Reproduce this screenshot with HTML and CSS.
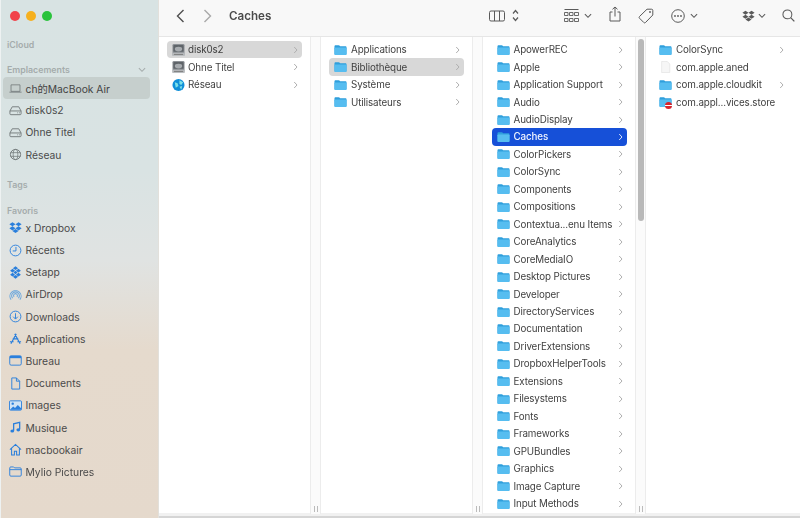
FILE: index.html
```html
<!DOCTYPE html>
<html lang="fr">
<head>
<meta charset="utf-8">
<title>Caches</title>
<link rel="stylesheet" href="styles.css">
</head>
<body>
<svg class="defs" aria-hidden="true">
  <symbol id="folder" viewBox="0 0 14 12">
    <path d="M0.5 2.2C0.5 1.3 1 .8 1.9 .8H5c.6 0 .9.2 1.2.6l.5.6h5.4c1 0 1.4.5 1.4 1.4V10c0 1-.5 1.5-1.4 1.5H1.9C1 11.500 .5 11 .5 10z" fill="#2f9fdc"/>
    <path d="M.5 4.200C.5 3.600.9 3.300 1.500 3.300H12.500C13.100 3.300 13.500 3.600 13.500 4.200V10C13.500 11 13 11.500 12.100 11.500H1.900C1 11.500 .5 11 .5 10z" fill="#56bdf0"/>
  </symbol>
  <symbol id="disk" viewBox="0 0 14 14">
    <rect x=".5" y=".5" width="13" height="13" rx="1.500" fill="#8d9196"/>
    <rect x="1.500" y="1.500" width="11" height="7.500" rx="1" fill="#5f6469"/>
    <ellipse cx="7" cy="6" rx="4" ry="2.500" fill="#a7abaf"/>
    <rect x=".5" y="10" width="13" height="3.500" fill="#b9bcbf"/>
    <rect x="2" y="11.200" width="10" height="1" fill="#777"/>
  </symbol>
  <symbol id="chev" viewBox="0 0 5 8"><path d="M1.200 1l2.800 3-2.800 3" fill="none" stroke="currentColor" stroke-width="1"/></symbol>
  <symbol id="down" viewBox="0 0 9 6"><path d="M1 1l3.500 3.500L8 1" fill="none" stroke="currentColor" stroke-width="1.200"/></symbol>
  <symbol id="hdd" viewBox="0 0 14 12"><path d="M3.500 2h7L13 6.500V9.500a1 1 0 0 1-1 1H2a1 1 0 0 1-1-1V6.500zM1 6.500h12M9 8.500h.8M11 8.500h.8" fill="none" stroke="currentColor"/></symbol>
</svg>
<div class="window">
  <aside class="sidebar">
    <div class="lights"><i class="light red"></i><i class="light yellow"></i><i class="light green"></i></div>
    <h2 class="head">iCloud</h2>
    <h2 class="head head-tight">Emplacements <svg class="head-down"><use href="#down"/></svg></h2>
    <ul class="list">
      <li class="item active"><svg class="ico gray" viewBox="0 0 16 12"><path d="M2.500 1.500h11v8h-11zM.5 10.500h15" fill="none" stroke="currentColor"/></svg>ch的MacBook Air</li>
      <li class="item"><svg class="ico gray" viewBox="0 0 14 12"><use href="#hdd"/></svg>disk0s2</li>
      <li class="item"><svg class="ico gray" viewBox="0 0 14 12"><use href="#hdd"/></svg>Ohne Titel</li>
      <li class="item"><svg class="ico gray" viewBox="0 0 14 14"><circle cx="7" cy="7" r="5.500" fill="none" stroke="currentColor"/><ellipse cx="7" cy="7" rx="2.500" ry="5.500" fill="none" stroke="currentColor" stroke-width=".8"/><path d="M1.500 5h11M1.500 9h11" stroke="currentColor" stroke-width=".8"/></svg>Réseau</li>
    </ul>
    <h2 class="head">Tags</h2>
    <h2 class="head head-fav">Favoris</h2>
    <ul class="list">
      <li class="item"><svg class="ico blue" viewBox="0 0 14 13"><path d="M3.700 .8L7 3 3.700 5.200.4 3zM10.300 .8L13.600 3l-3.300 2.200L7 3zM3.700 5.200L7 7.400 3.700 9.600.4 7.400zM10.300 5.200l3.300 2.200-3.300 2.200L7 7.400zM7 8.200l3.300 2.100L7 12.400l-3.300-2.100z" fill="currentColor"/></svg>x Dropbox</li>
      <li class="item"><svg class="ico blue" viewBox="0 0 14 14"><circle cx="7" cy="7" r="5.800" fill="none" stroke="currentColor"/><path d="M7.500 3.200V7.500H4" fill="none" stroke="currentColor"/></svg>Récents</li>
      <li class="item"><svg class="ico blue" viewBox="0 0 14 14"><path d="M7 .3l2.800 2-2.800 2-2.800-2zM3.800 3l2.700 2-2.700 2-2.600-2zM10.200 3l2.600 2-2.600 2-2.700-2zM3.800 7.300l2.700 2-2.700 2-2.600-2zM10.200 7.300l2.600 2-2.600 2-2.700-2zM7 9.700l2.800 2-2.800 2-2.800-2zM7 5.200l2.200 1.800L7 8.800 4.800 7z" fill="currentColor"/></svg>Setapp</li>
      <li class="item"><svg class="ico airdrop" viewBox="0 0 14 14"><path d="M2.300 12.500a6 6 0 1 1 9.400 0M4 11a4 4 0 1 1 6 0M5.500 9.500a2 2 0 1 1 3 0" fill="none" stroke="currentColor" stroke-width="1.100"/></svg>AirDrop</li>
      <li class="item"><svg class="ico blue" viewBox="0 0 14 14"><circle cx="7" cy="7" r="5.800" fill="none" stroke="currentColor"/><path d="M7 3.500v6M4.500 7.200L7 9.800l2.500-2.600" fill="none" stroke="currentColor"/></svg>Downloads</li>
      <li class="item"><svg class="ico blue" viewBox="0 0 14 14"><path d="M7.800 2L3.500 10M6.200 2l4.300 8M1 10.500h4M9 10.500h4M4 7.500h6M2 12.500l1-1.500M12 12.500l-1-1.500" fill="none" stroke="currentColor" stroke-width="1.300"/></svg>Applications</li>
      <li class="item"><svg class="ico blue" viewBox="0 0 14 12"><rect x=".8" y="1" width="12.400" height="10" rx="1.500" fill="none" stroke="currentColor"/><rect x=".8" y="1" width="12.400" height="2.500" fill="currentColor"/></svg>Bureau</li>
      <li class="item"><svg class="ico blue" viewBox="0 0 14 14"><path d="M3 1h5l3.500 3.500V13H3zM8 1v3.500h3.500" fill="none" stroke="currentColor"/></svg>Documents</li>
      <li class="item"><svg class="ico blue" viewBox="0 0 14 12"><rect x=".5" y="1" width="13" height="10" rx="1" fill="#cfe3f5" stroke="currentColor"/><circle cx="4" cy="4" r="1.300" fill="currentColor"/><path d="M1 10.500l3.500-3.500 2 1.700L9.500 5.500l3.500 3.500v1.500z" fill="currentColor"/></svg>Images</li>
      <li class="item"><svg class="ico blue" viewBox="0 0 14 14"><path d="M5 10.500V3l6.500-1.500v7.500" fill="none" stroke="currentColor" stroke-width="1.400"/><ellipse cx="3.500" cy="10.800" rx="2" ry="1.700" fill="currentColor"/><ellipse cx="10" cy="9.500" rx="2" ry="1.700" fill="currentColor"/></svg>Musique</li>
      <li class="item"><svg class="ico blue" viewBox="0 0 14 14"><path d="M1 7.200L7 1.500l6 5.700M2.800 6v6.800h3V9h2.400v3.800h3V6" fill="none" stroke="currentColor" stroke-width="1.100"/></svg>macbookair</li>
      <li class="item"><svg class="ico blue" viewBox="0 0 14 12"><path d="M.8 2.200c0-.7.4-1.100 1.100-1.100H5l1 1h6c.8 0 1.200.4 1.200 1.200v6.500c0 .8-.4 1.200-1.200 1.200H2c-.8 0-1.200-.4-1.200-1.200zM.8 4h12.400" fill="none" stroke="currentColor"/></svg>Mylio Pictures</li>
    </ul>
  </aside>
  <main class="main">
    <header class="toolbar">
      <svg class="back" viewBox="0 0 9 14"><path d="M7.500 1L1.500 7l6 6" fill="none" stroke="currentColor" stroke-width="1.400"/></svg>
      <svg class="forward" viewBox="0 0 9 14"><path d="M1.500 1l6 6-6 6" fill="none" stroke="currentColor" stroke-width="1.400"/></svg>
      <h1 class="title">Caches</h1>
      <div class="tools">
        <svg class="t-cols" viewBox="0 0 16 12"><path d="M2 1h12a1.500 1.500 0 0 1 1.500 1.500v7A1.500 1.500 0 0 1 14 11H2a1.500 1.500 0 0 1-1.500-1.500v-7A1.500 1.500 0 0 1 2 1zM5.500 1v10M10.500 1v10" fill="none" stroke="currentColor"/></svg>
        <svg class="t-updown" viewBox="0 0 7 13"><path d="M1 4.500l2.500-3 2.500 3M1 8.500l2.500 3 2.500-3" fill="none" stroke="currentColor" stroke-width="1.200"/></svg>
        <svg class="t-grid" viewBox="0 0 15 14"><path d="M.5 .5h14" stroke="currentColor"/><path d="M.5 3.500h3.500v3H.5zM5.500 3.500h3.500v3H5.500zM10.500 3.500h4v3h-4zM.5 9.500h3.500v3H.5zM5.500 9.500h3.500v3H5.500zM10.500 9.500h4v3h-4z" fill="none" stroke="currentColor" stroke-width=".9"/></svg>
        <svg class="t-down" viewBox="0 0 9 6"><use href="#down"/></svg>
        <svg class="t-share" viewBox="0 0 12 16"><path d="M3.500 6H1v9h10V6H8.500M6 10.500V1M3.500 3.300L6 1l2.500 2.300" fill="none" stroke="currentColor"/></svg>
        <svg class="t-tag" viewBox="0 0 16 16"><path d="M9 1.200h4.500a1.300 1.300 0 0 1 1.300 1.300V7L7.500 14.500a1.200 1.200 0 0 1-1.700 0L1.500 10.200a1.200 1.200 0 0 1 0-1.700z" fill="none" stroke="currentColor"/><circle cx="12" cy="4" r=".9" fill="currentColor"/></svg>
        <svg class="t-more" viewBox="0 0 14 14"><circle cx="7" cy="7" r="6.300" fill="none" stroke="currentColor"/><circle cx="4" cy="7" r=".9" fill="currentColor"/><circle cx="7" cy="7" r=".9" fill="currentColor"/><circle cx="10" cy="7" r=".9" fill="currentColor"/></svg>
        <svg class="t-down t-gap2" viewBox="0 0 9 6"><use href="#down"/></svg>
        <svg class="t-box" viewBox="0 0 14 13"><path d="M3.700 .8L7 3 3.700 5.200.4 3zM10.300 .8L13.600 3l-3.300 2.200L7 3zM3.700 5.200L7 7.400 3.700 9.600.4 7.400zM10.300 5.200l3.300 2.200-3.300 2.200L7 7.400zM7 8.200l3.300 2.100L7 12.400l-3.300-2.100z" fill="currentColor"/></svg>
        <svg class="t-down t-gap3" viewBox="0 0 9 6"><use href="#down"/></svg>
        <svg class="t-search" viewBox="0 0 14 14"><circle cx="5.800" cy="5.800" r="4.800" fill="none" stroke="currentColor" stroke-width="1.100"/><path d="M9.300 9.300l4 4" stroke="currentColor" stroke-width="1.400"/></svg>
      </div>
    </header>
    <section class="browser">
      <div class="col col-first">
        <div class="row sel"><svg class="fi"><use href="#disk"/></svg><span class="name">disk0s2</span><svg class="arrow"><use href="#chev"/></svg></div>
        <div class="row"><svg class="fi"><use href="#disk"/></svg><span class="name">Ohne Titel</span><svg class="arrow"><use href="#chev"/></svg></div>
        <div class="row"><svg class="fi" viewBox="0 0 14 14"><circle cx="7" cy="7" r="6.500" fill="#0f8fd8"/><path d="M3 4l3 1 1 3-3 2zM8 2l4 2-2 3-2-1zM8 9l3-1-1 4z" fill="#7be0e8"/></svg><span class="name">Réseau</span><svg class="arrow"><use href="#chev"/></svg></div>
      </div>
      <div class="strip"><i class="grip"></i></div>
      <div class="col">
        <div class="row"><svg class="fi"><use href="#folder"/></svg><span class="name">Applications</span><svg class="arrow"><use href="#chev"/></svg></div>
        <div class="row sel"><svg class="fi"><use href="#folder"/></svg><span class="name">Bibliothèque</span><svg class="arrow"><use href="#chev"/></svg></div>
        <div class="row"><svg class="fi"><use href="#folder"/></svg><span class="name">Système</span><svg class="arrow"><use href="#chev"/></svg></div>
        <div class="row"><svg class="fi"><use href="#folder"/></svg><span class="name">Utilisateurs</span><svg class="arrow"><use href="#chev"/></svg></div>
      </div>
      <div class="strip"><i class="grip"></i></div>
      <div class="col col-wide">
        <div class="row"><svg class="fi"><use href="#folder"/></svg><span class="name">ApowerREC</span><svg class="arrow"><use href="#chev"/></svg></div>
        <div class="row"><svg class="fi"><use href="#folder"/></svg><span class="name">Apple</span><svg class="arrow"><use href="#chev"/></svg></div>
        <div class="row"><svg class="fi"><use href="#folder"/></svg><span class="name">Application Support</span><svg class="arrow"><use href="#chev"/></svg></div>
        <div class="row"><svg class="fi"><use href="#folder"/></svg><span class="name">Audio</span><svg class="arrow"><use href="#chev"/></svg></div>
        <div class="row"><svg class="fi"><use href="#folder"/></svg><span class="name">AudioDisplay</span><svg class="arrow"><use href="#chev"/></svg></div>
        <div class="row current"><svg class="fi"><use href="#folder"/></svg><span class="name">Caches</span><svg class="arrow"><use href="#chev"/></svg></div>
        <div class="row"><svg class="fi"><use href="#folder"/></svg><span class="name">ColorPickers</span><svg class="arrow"><use href="#chev"/></svg></div>
        <div class="row"><svg class="fi"><use href="#folder"/></svg><span class="name">ColorSync</span><svg class="arrow"><use href="#chev"/></svg></div>
        <div class="row"><svg class="fi"><use href="#folder"/></svg><span class="name">Components</span><svg class="arrow"><use href="#chev"/></svg></div>
        <div class="row"><svg class="fi"><use href="#folder"/></svg><span class="name">Compositions</span><svg class="arrow"><use href="#chev"/></svg></div>
        <div class="row"><svg class="fi"><use href="#folder"/></svg><span class="name">Contextua...enu Items</span><svg class="arrow"><use href="#chev"/></svg></div>
        <div class="row"><svg class="fi"><use href="#folder"/></svg><span class="name">CoreAnalytics</span><svg class="arrow"><use href="#chev"/></svg></div>
        <div class="row"><svg class="fi"><use href="#folder"/></svg><span class="name">CoreMediaIO</span><svg class="arrow"><use href="#chev"/></svg></div>
        <div class="row"><svg class="fi"><use href="#folder"/></svg><span class="name">Desktop Pictures</span><svg class="arrow"><use href="#chev"/></svg></div>
        <div class="row"><svg class="fi"><use href="#folder"/></svg><span class="name">Developer</span><svg class="arrow"><use href="#chev"/></svg></div>
        <div class="row"><svg class="fi"><use href="#folder"/></svg><span class="name">DirectoryServices</span><svg class="arrow"><use href="#chev"/></svg></div>
        <div class="row"><svg class="fi"><use href="#folder"/></svg><span class="name">Documentation</span><svg class="arrow"><use href="#chev"/></svg></div>
        <div class="row"><svg class="fi"><use href="#folder"/></svg><span class="name">DriverExtensions</span><svg class="arrow"><use href="#chev"/></svg></div>
        <div class="row"><svg class="fi"><use href="#folder"/></svg><span class="name">DropboxHelperTools</span><svg class="arrow"><use href="#chev"/></svg></div>
        <div class="row"><svg class="fi"><use href="#folder"/></svg><span class="name">Extensions</span><svg class="arrow"><use href="#chev"/></svg></div>
        <div class="row"><svg class="fi"><use href="#folder"/></svg><span class="name">Filesystems</span><svg class="arrow"><use href="#chev"/></svg></div>
        <div class="row"><svg class="fi"><use href="#folder"/></svg><span class="name">Fonts</span><svg class="arrow"><use href="#chev"/></svg></div>
        <div class="row"><svg class="fi"><use href="#folder"/></svg><span class="name">Frameworks</span><svg class="arrow"><use href="#chev"/></svg></div>
        <div class="row"><svg class="fi"><use href="#folder"/></svg><span class="name">GPUBundles</span><svg class="arrow"><use href="#chev"/></svg></div>
        <div class="row"><svg class="fi"><use href="#folder"/></svg><span class="name">Graphics</span><svg class="arrow"><use href="#chev"/></svg></div>
        <div class="row"><svg class="fi"><use href="#folder"/></svg><span class="name">Image Capture</span><svg class="arrow"><use href="#chev"/></svg></div>
        <div class="row"><svg class="fi"><use href="#folder"/></svg><span class="name">Input Methods</span><svg class="arrow"><use href="#chev"/></svg></div>
      </div>
      <div class="strip strip-scroll"><i class="thumb"></i><i class="grip"></i></div>
      <div class="col col-last">
        <div class="row"><svg class="fi"><use href="#folder"/></svg><span class="name">ColorSync</span><svg class="arrow"><use href="#chev"/></svg></div>
        <div class="row"><svg class="fi" viewBox="0 0 14 14"><path d="M2.500 .5H9L12 3.500V13.500H2.500z" fill="#f6f6f6" stroke="#dedede" stroke-width=".7"/></svg><span class="name">com.apple.aned</span></div>
        <div class="row"><svg class="fi"><use href="#folder"/></svg><span class="name">com.apple.cloudkit</span><svg class="arrow"><use href="#chev"/></svg></div>
        <div class="row"><span class="badged"><svg class="fi"><use href="#folder"/></svg><i class="noentry"></i></span><span class="name">com.appl...vices.store</span></div>
      </div>
    </section>
  </main>
</div>
</body>
</html>
```
FILE: styles.css
```css
* { box-sizing: border-box; }
html, body { margin: 0; padding: 0; height: 100%; background: #fff; overflow: hidden; }
body { font-family: Inter, "Noto Sans CJK SC", "Liberation Sans", sans-serif; color: #3c3c3c; }
.defs { position: absolute; width: 0; height: 0; }
ul { list-style: none; margin: 0; padding: 0; }
h1, h2 { margin: 0; }

.window { display: flex; width: 800px; height: 518px; filter: blur(.35px); }

.sidebar {
  width: 159px; flex: none; padding: 8px 8px 0 2px;
  background: linear-gradient(180deg, #d8e3e3 0, #d9e3e3 170px, #e0e3e2 260px, #e5dacd 350px, #e5d9cc 518px);
  border-left: 1px solid #eef2f2;
  border-right: 1px solid #e2e0db;
}
.lights { display: flex; gap: 6px; padding-left: 7px; height: 16px; align-items: center; margin-bottom: 12.500px; }
.light { width: 10px; height: 10px; border-radius: 50%; }
.red { background: #f1424a; }
.yellow { background: #f6b01e; }
.green { background: #2ac33c; }

.head { display: flex; align-items: center; justify-content: space-between; height: 15px; margin-bottom: 10.500px; padding: 0 4px; font-size: 8.800px; font-weight: 600; color: #a5acac; line-height: 15px; }
.head-tight { margin-bottom: 0; }
.head-fav { margin-bottom: -1px; }
.head-down { width: 8px; height: 6px; color: #a5acac; }
.list { margin-bottom: 11.500px; }
.list:last-child { margin-bottom: 0; }
.item { display: flex; align-items: center; height: 22.200px; width: 147px; padding-left: 6px; gap: 2.500px; font-size: 10.300px; color: #4b4b4b; border-radius: 4px; white-space: nowrap; }
.active { background: #c6cfcd; color: #444; }
.ico { width: 13px; height: 13px; flex: none; margin-right: 1px; }
.gray { color: #72797a; }
.blue { color: #2a7fdc; }
.airdrop { color: #6ea8dc; }

.main { flex: 1; min-width: 0; display: flex; flex-direction: column; }
.toolbar { height: 37px; flex: none; display: flex; align-items: center; padding: 0 0 5px 17px; background: #f8f8f8; border-bottom: 1px solid #e6e6e6; color: #5a5a5a; }
.back { width: 9px; height: 14px; margin-right: 18px; color: #4f4f4f; }
.forward { width: 9px; height: 14px; margin-right: 17px; color: #a9a9a9; }
.title { font-size: 11.600px; font-weight: 600; color: #4a4a4a; }
.tools { display: flex; align-items: center; margin-left: 218px; }
.tools svg { flex: none; }
.t-cols { width: 16px; height: 12px; margin-right: 7px; }
.t-updown { width: 7px; height: 13px; margin-right: 45px; }
.t-grid { width: 15px; height: 14px; margin-right: 5px; }
.t-down { width: 8px; height: 6px; }
.t-share { width: 12px; height: 16px; margin: -3px 0 0 16.500px; }
.t-tag { width: 16px; height: 16px; margin-left: 17px; }
.t-more { width: 14px; height: 14px; margin-left: 17px; }
.t-gap2 { margin-left: 5px; }
.t-box { width: 13px; height: 12px; margin-left: 44px; }
.t-gap3 { margin-left: 3px; }
.t-search { width: 13px; height: 13px; margin-left: 16px; }

.browser { flex: 1; min-height: 0; display: flex; padding-bottom: 5px; background: #fff; border-bottom: 2px solid #d5d5d5; box-shadow: inset 0 -3px 0 #f1f1f1; }
.col { width: 151px; flex: none; padding-top: 4px; overflow: hidden; }
.col-wide { width: 152px; padding-left: 1px; }
.col-wide .fi { margin-right: 3.500px; }
.col-last { flex: 1; }
.col-first .fi { height: 14px; margin-right: 3px; }
.strip { position: relative; width: 11px; flex: none; margin-bottom: -3px; background: #fbfbfb; border-left: 1px solid #ececec; border-right: 1px solid #ececec; }
.grip { position: absolute; left: 3px; bottom: 2px; width: 4px; height: 6px; border-left: 1px solid #bbb; border-right: 1px solid #bbb; }
.thumb { position: absolute; left: 2px; top: 2px; width: 6px; height: 182px; border-radius: 3px; background: #b9b9b9; }

.row { display: flex; align-items: center; height: 17.460px; margin: 0 8px; padding: 0 4px 0 5px; font-size: 9.800px; letter-spacing: -.12px; color: #3f3f3f; border-radius: 4px; white-space: nowrap; }
.col-last .row { margin-right: 0; }
.sel { background: #d8d8d8; }
.current { background: #1650d8; color: #f2f6ff; font-weight: 500; }
.fi { width: 13px; height: 12px; flex: none; margin-right: 4px; }
.name { flex: 1; min-width: 0; }
.arrow { width: 5px; height: 8px; flex: none; color: #b0b0b0; }
.current .arrow { color: #d5e0fb; }
.col-last .arrow { margin-right: 12px; }
.badged { position: relative; display: flex; flex: none; }
.noentry { position: absolute; left: 6px; top: 6px; width: 7px; height: 7px; border-radius: 50%; background: linear-gradient(180deg, #d8242c 0 2.500px, #fff 2.500px 4.500px, #d8242c 4.500px); }
```
